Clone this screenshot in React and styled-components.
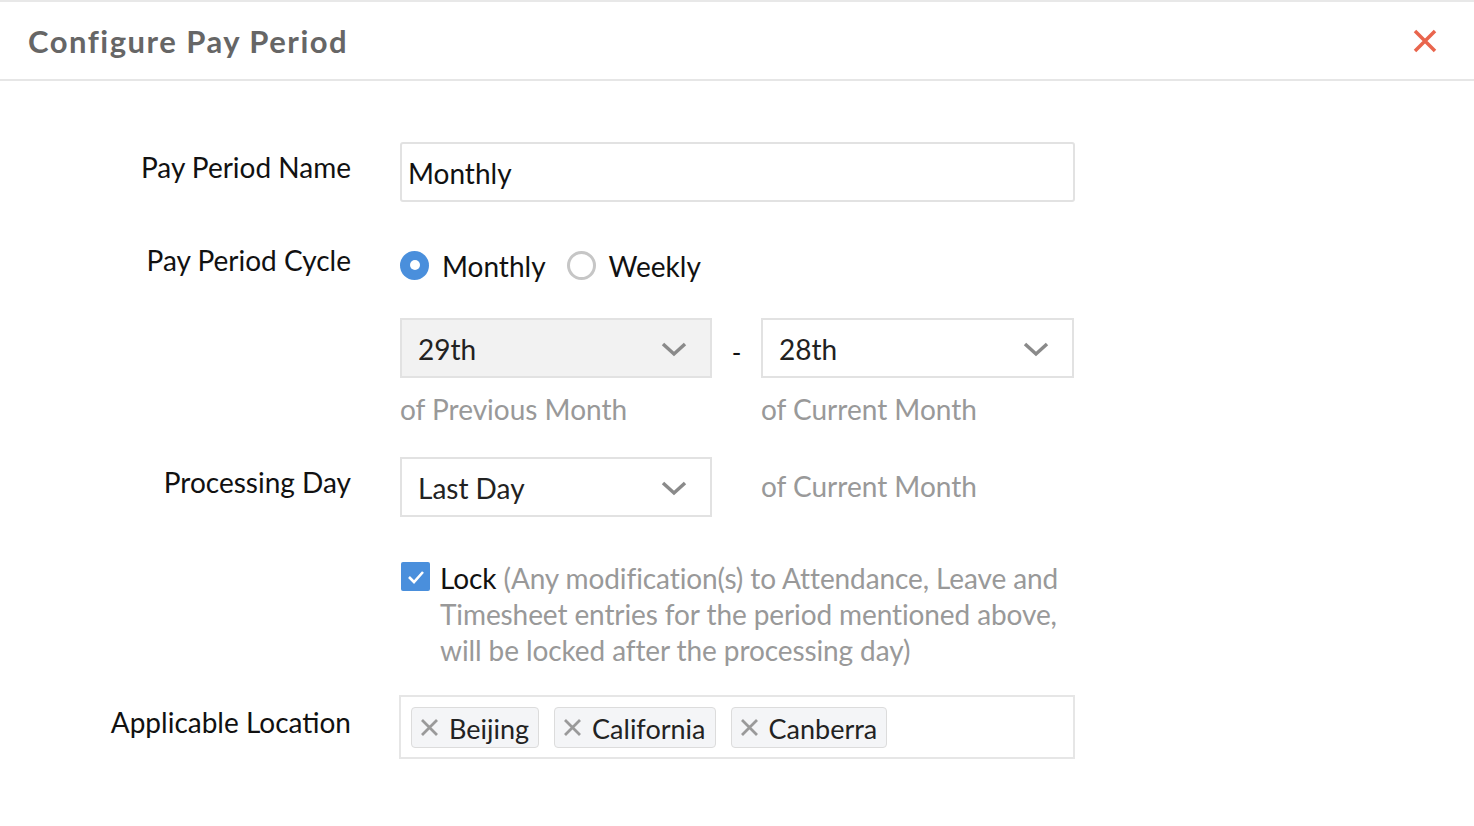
import React from "react";
import styled, { createGlobalStyle } from "styled-components";

const GlobalStyle = createGlobalStyle`
  body {
    margin: 0;
    background: #fff;
    font-family: Lato, "Open Sans", sans-serif;
  }
`;

const Modal = styled.div`
  width: 1474px;
  min-height: 826px;
  border-top: 2px solid #e8e8e8;
  box-sizing: border-box;
`;

const Header = styled.div`
  height: 77px;
  display: flex;
  align-items: center;
  justify-content: space-between;
  padding: 0 36px 0 28px;
  border-bottom: 2px solid #e6e6e6;
`;

const Title = styled.h1`
  margin: 0;
  font-size: 31px;
  font-weight: 700;
  color: #666;
  letter-spacing: 1.5px;
`;

const CloseButton = styled.button`
  border: 0;
  background: none;
  padding: 0;
  width: 26px;
  height: 26px;
  display: flex;
  align-items: center;
  justify-content: center;
  cursor: pointer;
`;

const Form = styled.div`
  padding-top: 61px;
`;

const Row = styled.div`
  display: grid;
  grid-template-columns: 351px 675px;
  column-gap: 49px;
  margin-top: ${(p) => p.$mt || 0}px;
`;

const Label = styled.div`
  text-align: right;
  font-size: 28px;
  color: #111;
  padding-top: ${(p) => p.$pt || 0}px;
  line-height: 36px;
`;

const TextInput = styled.div`
  height: 60px;
  box-sizing: border-box;
  border: 2px solid #e2e2e2;
  border-radius: 3px;
  display: flex;
  align-items: center;
  padding: 1px 6px 0;
  font-size: 28px;
  color: #111;
`;

const RadioGroup = styled.div`
  display: flex;
  align-items: center;
  height: 46px;
`;

const RadioOption = styled.label`
  display: flex;
  align-items: center;
  font-size: 28px;
  color: #111;
  margin-right: 21px;
  padding-top: 1px;
`;

const RadioCircle = styled.span`
  width: 29px;
  height: 29px;
  border-radius: 50%;
  box-sizing: border-box;
  margin-right: 13px;
  margin-top: -1px;
  display: flex;
  align-items: center;
  justify-content: center;
  background: ${(p) => (p.$checked ? "#4a8fdc" : "#fff")};
  border: ${(p) => (p.$checked ? "none" : "3px solid #c6c6c6")};
  &::after {
    content: "";
    display: ${(p) => (p.$checked ? "block" : "none")};
    width: 10px;
    height: 10px;
    border-radius: 50%;
    background: #fff;
  }
`;

const SelectPair = styled.div`
  display: grid;
  grid-template-columns: 312px 49px 313px;
  margin-top: ${(p) => p.$mt || 0}px;
`;

const Select = styled.div`
  height: 60px;
  box-sizing: border-box;
  border: 2px solid #e2e2e2;
  background: ${(p) => (p.$disabled ? "#f2f2f2" : "#fff")};
  display: flex;
  align-items: center;
  justify-content: space-between;
  padding: 1px 23px 0 16px;
  font-size: 28px;
  color: #222;
`;

const Dash = styled.div`
  display: flex;
  align-items: center;
  justify-content: center;
  font-size: 26px;
  color: #111;
  padding-top: 8px;
`;

const Hint = styled.div`
  font-size: 28px;
  color: #999;
  line-height: 36px;
  padding-top: ${(p) => p.$pt || 0}px;
`;

const CheckRow = styled.div`
  display: flex;
  align-items: flex-start;
`;

const Checkbox = styled.span`
  flex: none;
  width: 29px;
  height: 29px;
  background: #4a8fdc;
  border-radius: 2px;
  margin: 2px 10px 0 1px;
  display: flex;
  align-items: center;
  justify-content: center;
`;

const CheckText = styled.div`
  font-size: 28px;
  line-height: 36px;
  color: #999;
  width: 630px;
  letter-spacing: -0.1px;
`;

const Strong = styled.span`
  color: #111;
`;

const TagBox = styled.div`
  height: 64px;
  box-sizing: border-box;
  border: 2px solid #e6e6e6;
  display: flex;
  align-items: center;
  gap: 15px;
  padding: 0 10px;
  margin-left: -1px;
`;

const Tag = styled.span`
  height: 41px;
  box-sizing: border-box;
  border: 1px solid #dcdcdc;
  border-radius: 4px;
  background: #f4f5f7;
  display: flex;
  align-items: center;
  padding: 2px 9px 0 8px;
  font-size: 27px;
  color: #222;
`;

const TagX = styled.svg`
  margin-right: 10px;
  margin-top: -2px;
`;

const Chevron = () => (
  <svg width="26" height="16" viewBox="0 0 26 16">
    <polyline points="2,3 13,13 24,3" fill="none" stroke="#8a8a8a" strokeWidth="3.5" />
  </svg>
);

const RemoveIcon = () => (
  <TagX width="19" height="19" viewBox="0 0 19 19">
    <path d="M2 2 L17 17 M17 2 L2 17" stroke="#9a9a9a" strokeWidth="2.8" />
  </TagX>
);

const App = () => {
  return (
    <Modal>
      <GlobalStyle />
      <Header>
        <Title>Configure Pay Period</Title>
        <CloseButton>
          <svg width="24" height="24" viewBox="0 0 24 24">
            <path d="M2 2 L22 22 M22 2 L2 22" stroke="#e9654d" strokeWidth="3.5" />
          </svg>
        </CloseButton>
      </Header>
      <Form>
        <Row>
          <Label $pt={7}>Pay Period Name</Label>
          <TextInput>Monthly</TextInput>
        </Row>
        <Row $mt={40}>
          <Label $pt={0}>Pay Period Cycle</Label>
          <RadioGroup>
            <RadioOption>
              <RadioCircle $checked />
              Monthly
            </RadioOption>
            <RadioOption>
              <RadioCircle />
              Weekly
            </RadioOption>
          </RadioGroup>
        </Row>
        <Row $mt={30}>
          <div />
          <div>
            <SelectPair>
              <Select $disabled>
                29th
                <Chevron />
              </Select>
              <Dash>-</Dash>
              <Select>
                28th
                <Chevron />
              </Select>
            </SelectPair>
            <SelectPair $mt={13}>
              <Hint>of Previous Month</Hint>
              <div />
              <Hint>of Current Month</Hint>
            </SelectPair>
          </div>
        </Row>
        <Row $mt={30}>
          <Label $pt={7}>Processing Day</Label>
          <SelectPair>
            <Select>
              Last Day
              <Chevron />
            </Select>
            <div />
            <Hint $pt={11}>of Current Month</Hint>
          </SelectPair>
        </Row>
        <Row $mt={43}>
          <div />
          <CheckRow>
            <Checkbox>
              <svg width="18" height="14" viewBox="0 0 18 14">
                <polyline points="2,7 7,12 16,2" fill="none" stroke="#fff" strokeWidth="2.6" />
              </svg>
            </Checkbox>
            <CheckText>
              <Strong>Lock</Strong> (Any modification(s) to Attendance, Leave and Timesheet
              entries for the period mentioned above, will be locked after the processing day)
            </CheckText>
          </CheckRow>
        </Row>
        <Row $mt={27}>
          <Label $pt={9}>Applicable Location</Label>
          <TagBox>
            <Tag>
              <RemoveIcon />
              Beijing
            </Tag>
            <Tag>
              <RemoveIcon />
              California
            </Tag>
            <Tag>
              <RemoveIcon />
              Canberra
            </Tag>
          </TagBox>
        </Row>
      </Form>
    </Modal>
  );
};

export default App;
